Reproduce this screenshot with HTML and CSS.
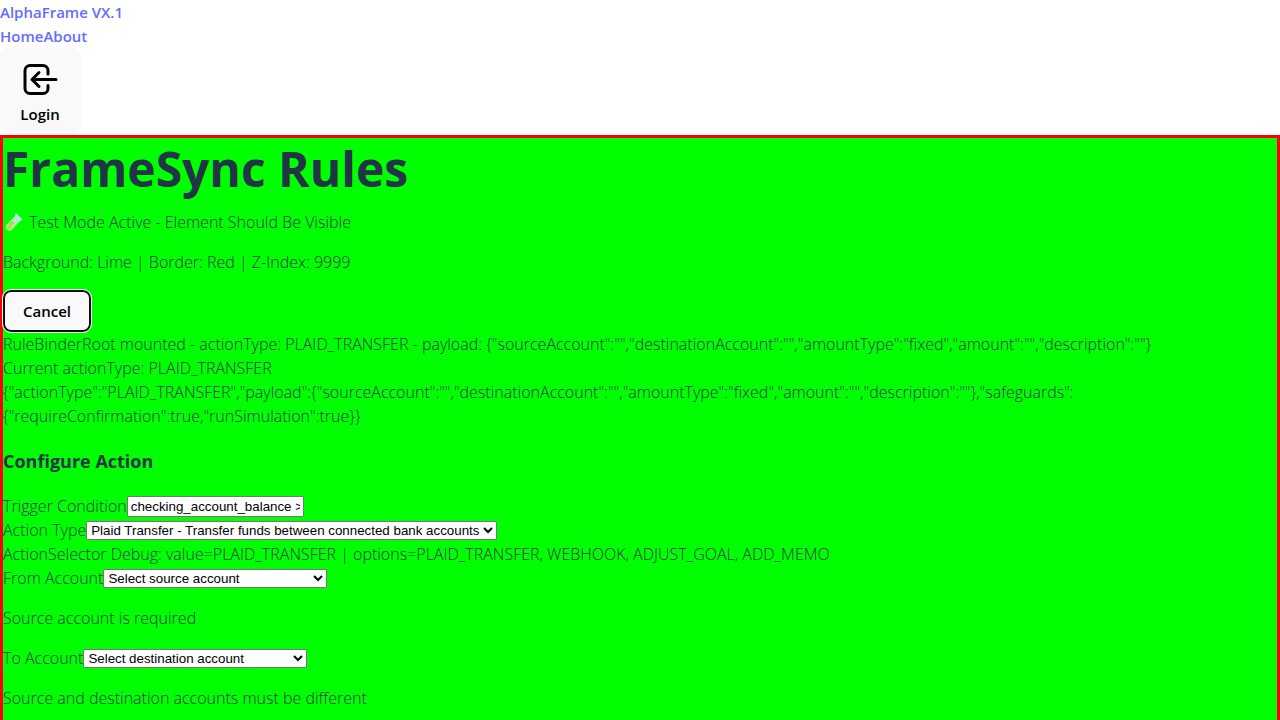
FILE: index.html
```html
<!DOCTYPE html>
<html lang="en">
<head>
<meta charset="utf-8">
<title>AlphaFrame VX.1</title>
<link rel="stylesheet" href="styles.css">
</head>
<body>
<header class="header">
  <div class="brand"><a href="#">AlphaFrame VX.1</a></div>
  <nav class="nav"><a href="#">Home</a><a href="#">About</a></nav>
  <button class="btn login" type="button">
    <svg class="login-icon" viewBox="0 0 40 40" aria-hidden="true"><path d="M28 14V10.500a5 5 0 0 0-5-5H10a5 5 0 0 0-5 5v18a5 5 0 0 0 5 5h13a5 5 0 0 0 5-5v-3M36 19.500H12M19 12.500l-7 7 7 7"/></svg>
    <span>Login</span>
  </button>
</header>
<main class="panel">
  <h1 class="title">FrameSync Rules</h1>
  <p class="note"><svg class="tube" viewBox="0 0 22 22" aria-hidden="true"><path class="glass" d="M13 4l5 5-9 9.500a3 3 0 0 1-5-5z"/><path class="liquid" d="M8 9.500l6 3.500-5 5.500a3 3 0 0 1-5-5z"/><path class="rim" d="M13 3.500l5 5"/><path class="bubbles" d="M7 13h1M9 11.500h1M6 16h1"/></svg> Test Mode Active - Element Should Be Visible</p>
  <p class="note">Background: Lime | Border: Red | Z-Index: 9999</p>
  <button class="btn cancel" type="button">Cancel</button>
  <div>RuleBinderRoot mounted - actionType: PLAID_TRANSFER - payload: {"sourceAccount":"","destinationAccount":"","amountType":"fixed","amount":"","description":""}</div>
  <div>Current actionType: PLAID_TRANSFER</div>
  <div>{"actionType":"PLAID_TRANSFER","payload":{"sourceAccount":"","destinationAccount":"","amountType":"fixed","amount":"","description":""},"safeguards":{"requireConfirmation":true,"runSimulation":true}}</div>
  <h3 class="subtitle">Configure Action</h3>
  <div class="field"><label for="trigger">Trigger Condition</label><input id="trigger" class="control trigger" type="text" value="checking_account_balance &gt; 5000"></div>
  <div class="field"><label for="action">Action Type</label><select id="action" class="control"><option>Plaid Transfer - Transfer funds between connected bank accounts</option></select></div>
  <div>ActionSelector Debug: value=PLAID_TRANSFER | options=PLAID_TRANSFER, WEBHOOK, ADJUST_GOAL, ADD_MEMO</div>
  <div class="field"><label for="from">From Account</label><select id="from" class="control account"><option>Select source account</option></select></div>
  <p class="note">Source account is required</p>
  <div class="field"><label for="to">To Account</label><select id="to" class="control account"><option>Select destination account</option></select></div>
  <p class="note">Source and destination accounts must be different</p>
</main>
</body>
</html>
```
FILE: styles.css
```css
body {
  margin: 0;
  font: 300 16px/24px "Open Sans", "Noto Sans", sans-serif;
  color: #213547;
}
a { color: #646cff; font-size: 15px; font-weight: 600; text-decoration: none; }
.header { display: flex; flex-direction: column; align-items: flex-start; }
.nav { display: flex; }
.btn {
  border: 0;
  border-radius: 8px;
  background: #f9f9f9;
  color: #000;
  font: 600 15px/24px "Open Sans", sans-serif;
}
.login {
  display: flex;
  flex-direction: column;
  align-items: center;
  gap: 2px;
  padding: 12px 21px 9px 20px;
}
.login-icon {
  width: 40px;
  height: 40px;
  fill: none;
  stroke: #000;
  stroke-width: 3;
  stroke-linecap: round;
  stroke-linejoin: round;
}
.panel { border: 3px solid red; background: lime; }
.title { margin: 0 0 10px; font-size: 48px; line-height: 62px; font-weight: 700; }
.note { margin: 16px 0; }
.title + .note { margin-top: 0; }
.tube { width: 22px; height: 22px; vertical-align: -5px; }
.glass { fill: #b4e9d0; }
.liquid { fill: #b4e867; }
.rim { fill: none; stroke: #b9e6ff; stroke-width: 2; stroke-linecap: round; }
.bubbles { fill: none; stroke: #54943c; stroke-width: 1; }
.cancel {
  display: block;
  padding: 9px 20px;
  outline: 1px solid #fff;
  box-shadow: inset 0 0 0 2px #101010;
}
.subtitle { margin: 19px 0; font-size: 18px; line-height: 28px; font-weight: 700; }
.field { display: flex; align-items: center; height: 24px; }
.control { margin: 1px 0 0; font-family: "Liberation Sans", Arial, sans-serif; }
.trigger { box-sizing: border-box; width: 177px; }
.account { width: 224px; }
```
